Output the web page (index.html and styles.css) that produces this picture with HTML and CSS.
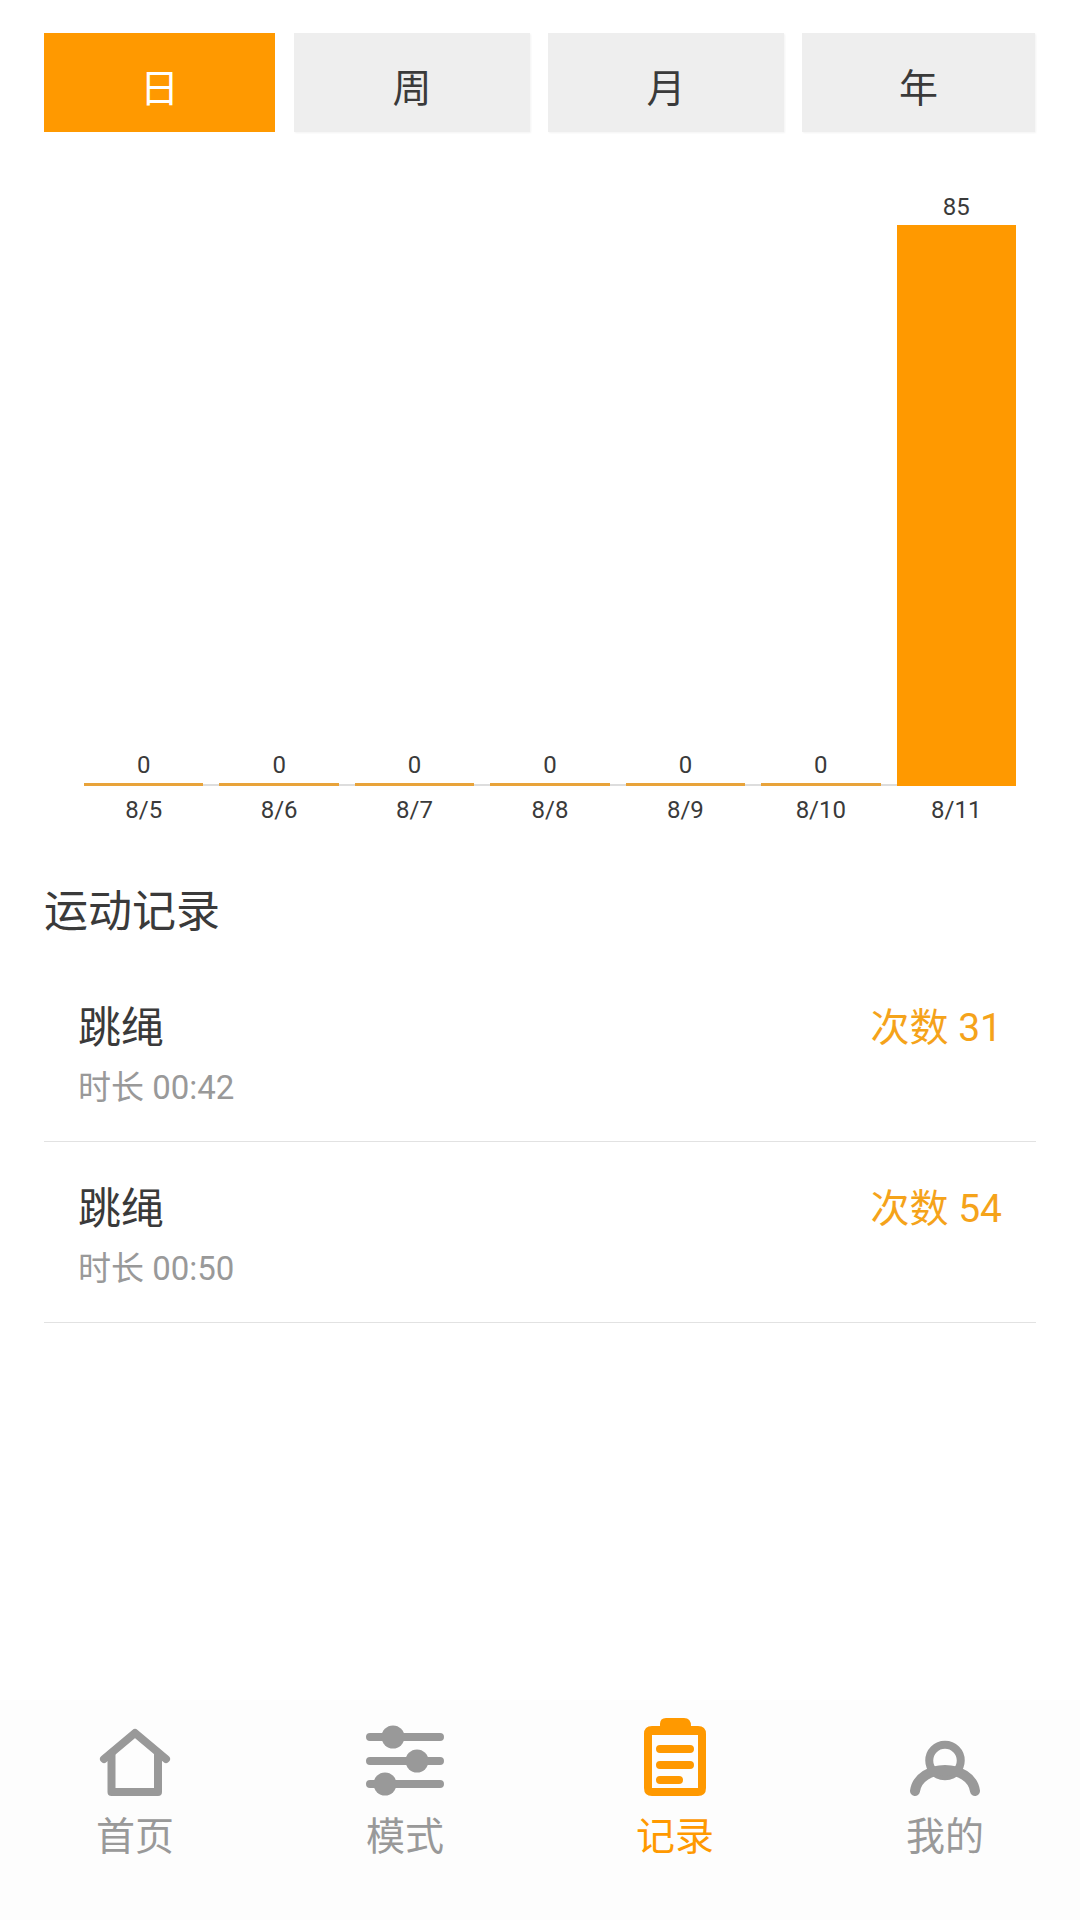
FILE: index.html
```html
<!DOCTYPE html>
<html lang="zh">
<head>
<meta charset="utf-8">
<title>运动记录</title>
<link rel="stylesheet" href="styles.css">
</head>
<body>
<div class="page">
  <main class="content">
    <div class="tabs">
      <div class="tab tab-active">日</div>
      <div class="tab">周</div>
      <div class="tab">月</div>
      <div class="tab">年</div>
    </div>
    <div class="chart">
      <div class="col"><span class="val">0</span><div class="bar bar-zero"></div><span class="day">8/5</span></div>
      <div class="col"><span class="val">0</span><div class="bar bar-zero"></div><span class="day">8/6</span></div>
      <div class="col"><span class="val">0</span><div class="bar bar-zero"></div><span class="day">8/7</span></div>
      <div class="col"><span class="val">0</span><div class="bar bar-zero"></div><span class="day">8/8</span></div>
      <div class="col"><span class="val">0</span><div class="bar bar-zero"></div><span class="day">8/9</span></div>
      <div class="col"><span class="val">0</span><div class="bar bar-zero"></div><span class="day">8/10</span></div>
      <div class="col"><span class="val">85</span><div class="bar bar-full"></div><span class="day">8/11</span></div>
    </div>
    <h2 class="heading">运动记录</h2>
    <div class="record">
      <div class="record-main">
        <div class="record-name">跳绳</div>
        <div class="record-time">时长 00:42</div>
      </div>
      <div class="record-count">次数 31</div>
    </div>
    <div class="record">
      <div class="record-main">
        <div class="record-name">跳绳</div>
        <div class="record-time">时长 00:50</div>
      </div>
      <div class="record-count">次数 54</div>
    </div>
  </main>
  <nav class="nav">
    <div class="nav-item">
      <svg class="nav-icon" width="90" height="84" viewBox="0 0 90 84">
        <path class="ln ln-8 ln-join" d="M14 43 L45 17 L76 43"/>
        <path class="ln ln-8 ln-join" d="M21.5 38 V76 H68 V38"/>
      </svg>
      <span class="nav-label">首页</span>
    </div>
    <div class="nav-item">
      <svg class="nav-icon" width="90" height="84" viewBox="0 0 90 84">
        <path class="ln ln-8" d="M10 21 H80 M10 45 H80 M10 68 H80"/>
        <circle class="dot" cx="33" cy="21" r="11.5"/>
        <circle class="dot" cx="57" cy="45" r="11.5"/>
        <circle class="dot" cx="25" cy="68" r="11.5"/>
      </svg>
      <span class="nav-label">模式</span>
    </div>
    <div class="nav-item nav-active">
      <svg class="nav-icon" width="90" height="84" viewBox="0 0 90 84">
        <path class="clip" d="M30 8 Q30 2 36 2 H54 Q61 2 61 10 H68 Q76 10 76 18 V72 Q76 80 68 80 H22 Q14 80 14 72 V18 Q14 10 22 10 H30 Z M22 19 V72 H68 V19 Z"/>
        <path class="ln ln-8" d="M30 33 H60 M30 49 H60 M30 64 H49"/>
      </svg>
      <span class="nav-label">记录</span>
    </div>
    <div class="nav-item">
      <svg class="nav-icon" width="90" height="84" viewBox="0 0 90 84">
        <circle class="ln ln-8" cx="45" cy="44.5" r="15.75"/>
        <path class="ln ln-10" d="M15 75 C17 61 31 54 45 54 C59 54 73 61 75 75"/>
      </svg>
      <span class="nav-label">我的</span>
    </div>
  </nav>
</div>
</body>
</html>
```

FILE: styles.css
```css
* { box-sizing: border-box; }
html, body { margin: 0; padding: 0; background: #fff; }
body { font-family: Roboto, "Noto Sans CJK SC", sans-serif; color: #3a3a3a; }
.page { width: 1080px; height: 1920px; display: flex; flex-direction: column; }
.content { flex: 1; padding: 33px 44px 0; }

.tabs { display: grid; grid-template-columns: 232px 236px 236px 233px; column-gap: 18px; }
.tab { height: 99px; padding-top: 5px; display: flex; align-items: center; justify-content: center; background: #eee; font-size: 39px; color: #3a3a3a; box-shadow: 1px 1px 2px rgba(0,0,0,.05); }
.tab-active { margin-right: 1px; background: #ff9900; color: #fff; box-shadow: none; }

.chart { display: flex; gap: 16px; margin: 61px 20px 0 40px; background: linear-gradient(#ddd, #ddd) 0 591px / 100% 2px no-repeat; }
.col { flex: 1; display: flex; flex-direction: column; align-items: center; justify-content: flex-end; }
.val { font-size: 24px; line-height: 28px; margin-bottom: 4px; color: #3a3a3a; }
.bar { width: 100%; background: #ff9900; }
.bar-zero { height: 3px; background: #e8a33a; }
.bar-full { height: 561px; }
.day { font-size: 24px; line-height: 28px; margin-top: 10px; color: #3a3a3a; }

.heading { margin: 58px 0 19px; font-size: 44px; line-height: 60px; font-weight: 400; color: #3a3a3a; }
.record { height: 181px; display: flex; justify-content: space-between; padding: 39px 34px 0; border-bottom: 1px solid #e2e2e2; }
.record-name { font-size: 43px; line-height: 56px; color: #3a3a3a; }
.record-time { font-size: 33px; line-height: 44px; margin-top: 10px; color: #999; }
.record-count { font-size: 39px; line-height: 56px; color: #f5a31a; }

.nav { height: 220px; display: grid; grid-template-columns: repeat(4, 270px); background: #fdfdfd; }
.nav-item { display: flex; flex-direction: column; align-items: center; padding-top: 16px; color: #999; }
.nav-icon { display: block; }
.nav-label { font-size: 39px; line-height: 50px; margin-top: 12px; }
.nav-active { color: #ff9900; }
.ln { fill: none; stroke: #999; stroke-linecap: round; }
.ln-8 { stroke-width: 8px; }
.ln-10 { stroke-width: 10px; }
.ln-join { stroke-linejoin: round; }
.dot { fill: #999; }
.clip { fill: #ff9900; fill-rule: evenodd; }
.nav-active .ln { stroke: #ff9900; }
```
